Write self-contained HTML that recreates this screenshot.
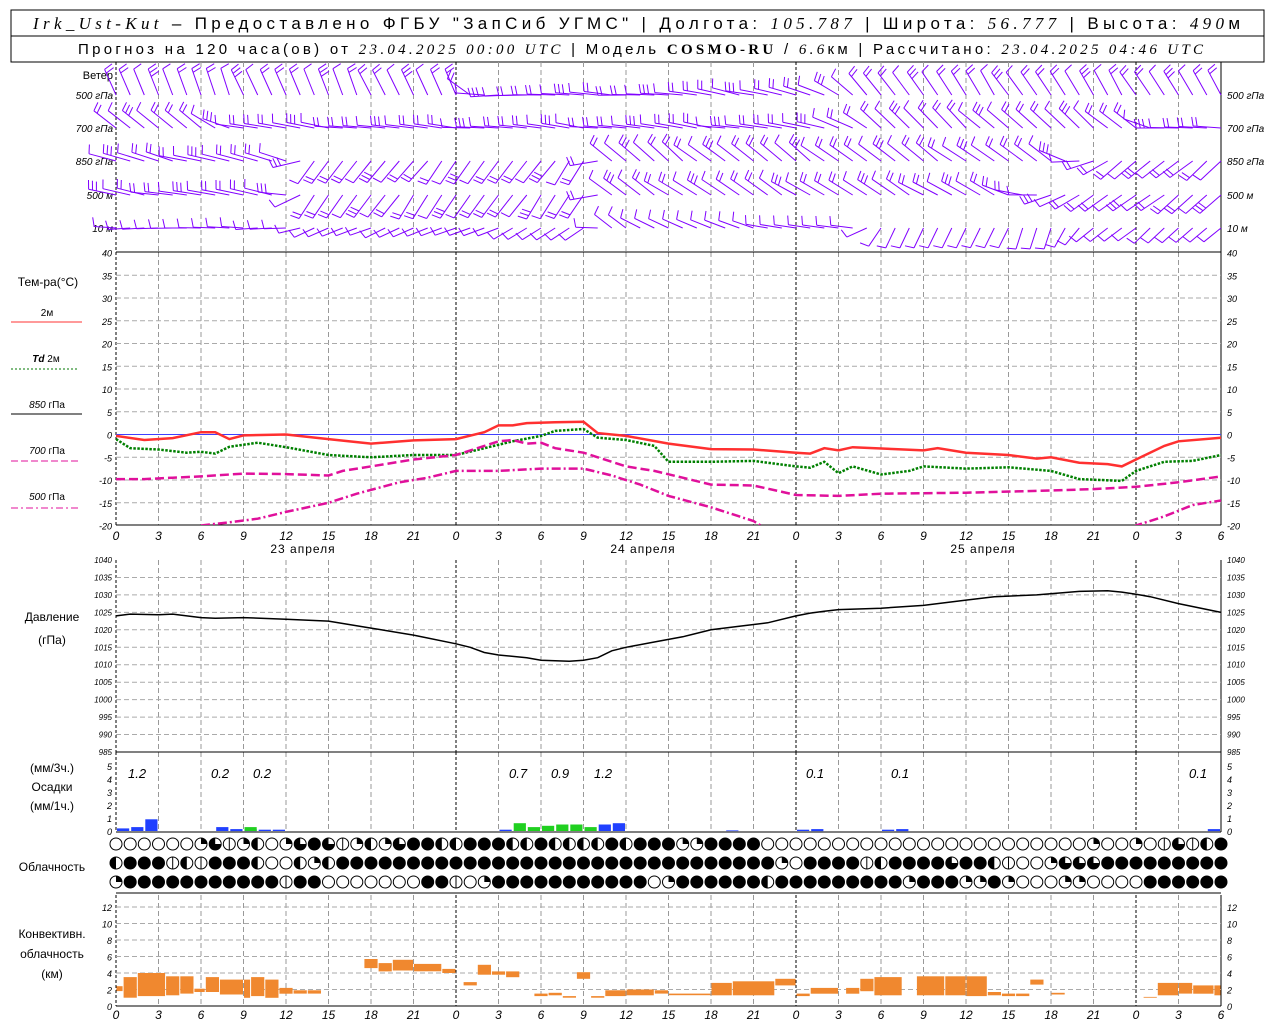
<!DOCTYPE html>
<html><head><meta charset="utf-8"><style>
html,body{margin:0;padding:0;background:#fff;width:1280px;height:1024px;overflow:hidden}
svg{display:block}
#w{position:absolute;left:0;top:0;width:1280px;height:1024px}
text{font-family:"Liberation Sans","DejaVu Sans",sans-serif}
</style></head><body>
<svg id="s" width="1280" height="1024" xmlns="http://www.w3.org/2000/svg" style="position:absolute;left:0;top:0">
<rect x="11" y="10" width="1253" height="52" fill="none" stroke="#000" stroke-width="1"/>
<line x1="11" y1="36" x2="1264" y2="36" stroke="#000"/>
<text x="33" y="29" font-size="17" textLength="1207" lengthAdjust="spacing"><tspan font-style="italic" font-family="Liberation Serif">Irk_Ust-Kut</tspan> – Предоставлено ФГБУ "ЗапСиб УГМС" | Долгота: <tspan font-style="italic" font-family="Liberation Serif">105.787</tspan> | Широта: <tspan font-style="italic" font-family="Liberation Serif">56.777</tspan> | Высота: <tspan font-style="italic" font-family="Liberation Serif">490</tspan>м</text>
<text x="78" y="54" font-size="15" textLength="1125" lengthAdjust="spacing">Прогноз на 120 часа(ов) от <tspan font-style="italic" font-family="Liberation Serif">23.04.2025 00:00 UTC</tspan>  | Модель <tspan font-weight="bold" font-family="Liberation Serif">COSMO-RU</tspan> / <tspan font-style="italic" font-family="Liberation Serif">6.6</tspan>км | Рассчитано: <tspan font-style="italic" font-family="Liberation Serif">23.04.2025 04:46 UTC</tspan></text>
</svg>
<div id="w"></div>
<script>
var out='';
var X0=116,PX=14.1667;
function hx(h){return X0+h*PX}
function f1(v){return (Math.round(v*10)/10).toString()}
function L(x1,y1,x2,y2,c,w,d){out+='<line x1="'+f1(x1)+'" y1="'+f1(y1)+'" x2="'+f1(x2)+'" y2="'+f1(y2)+'" stroke="'+(c||'#000')+'" stroke-width="'+(w||1)+'"'+(d?' stroke-dasharray="'+d+'"':'')+'/>';}
function T(x,y,t,sz,anc,st){out+='<text x="'+x+'" y="'+y+'" font-size="'+(sz||11)+'"'+(anc?' text-anchor="'+anc+'"':'')+(st||'')+'>'+t+'</text>';}
function R(x,y,w,h,c){out+='<rect x="'+f1(x)+'" y="'+f1(y)+'" width="'+f1(w)+'" height="'+f1(h)+'" fill="'+c+'"/>';}
var XR=hx(78);
var IT=' font-style="italic"';
function poly(pts,fn,c,w,d){var p=pts.map(function(q){return f1(hx(q[0]))+','+f1(fn(q[1]))}).join(' ');out+='<polyline points="'+p+'" fill="none" stroke="'+c+'" stroke-width="'+w+'"'+(d?' stroke-dasharray="'+d+'"':'')+'/>';}
function hours(y){for(var h=0;h<=78;h+=3){T(hx(h),y,(h%24),12,'middle',IT);}}
function ty(t){return 434.5-t*4.55}
function py(p){return 560+(1040-p)*3.4909}
function ry(v){return 831-v*13}
function ky(k){return 1006-k*8.25}

try{
function vgrid(y1,y2){for(var h=0;h<=78;h+=3){var day=(h%24==0);L(hx(h),y1,hx(h),y2,day?'#000':'#999',1,day?'3,2':'5,3');}}
vgrid(62,252);vgrid(252,525);vgrid(560,752);vgrid(752,832);vgrid(895,1006);
[[62,252],[252,525],[560,752],[752,832],[895,1006]].forEach(function(a){L(X0,a[0],X0,a[1],'#000',1,'3,2');L(XR,a[0],XR,a[1],'#000',1);});
}catch(e){}

try{
T(113,79,'Ветер',11,'end');
var lv=[[95,'500 гПа'],[128,'700 гПа'],[161,'850 гПа'],[195,'500 м'],[228,'10  м']];
lv.forEach(function(l){T(113,l[0]+4,l[1],10,'end',IT);T(1227,l[0]+4,l[1],10,'start',IT);});
var sched=[
 [[0,250],[24,245],[26,180],[40,185],[50,200],[54,235],[78,240]],
 [[0,220],[7,215],[9,190],[24,185],[50,190],[54,225],[72,220],[74,180],[78,180]],
 [[0,195],[12,195],[14,130],[33,125],[35,220],[66,215],[69,165],[71,140],[78,140]],
 [[0,190],[12,190],[14,125],[33,125],[35,215],[62,210],[66,165],[69,145],[78,140]],
 [[0,180],[12,180],[14,155],[24,160],[33,145],[35,215],[45,195],[52,185],[54,120],[66,110],[69,140],[78,140]]];
function ang(sc,h){for(var i=0;i<sc.length-1;i++){if(h>=sc[i][0]&&h<=sc[i+1][0]){var d=(sc[i+1][0]-sc[i][0])||1;var f=(h-sc[i][0])/d;return sc[i][1]+f*(sc[i+1][1]-sc[i][1]);}}return sc[sc.length-1][1];}
var P='#8000ff';
for(var li=0;li<5;li++){for(var h=0;h<=78;h++){
 var a=(ang(sched[li],h)+((h*37+li*11)%9-4))*Math.PI/180,len=(li==4)?22:28;
 var x=hx(h),y=lv[li][0],dx=Math.cos(a),dy=Math.sin(a),ex=x+dx*len,ey=y+dy*len;
 L(x,y,ex,ey,P,1);
 var nb=(li==4)?1:1+((h+li)%3==0?1:0)+((h+li)%2);
 var bx=dy,by=-dx; if(by>0){bx=-bx;by=-by;}
 for(var b=0;b<nb;b++){var qx=ex-dx*b*4,qy=ey-dy*b*4;L(qx,qy,qx+bx*9+dx*2,qy+by*9+dy*2,P,1);}
}}
}catch(e){}

try{
L(X0,252,XR,252,'#000',1);
for(var t=-20;t<=40;t+=5){var y=ty(t);if(t>-20&&t<40)L(X0,y,XR,y,'#aaa',1,'5,3');T(112,y+4,t,9,'end',IT);T(1227,y+4,t,9,'start',IT);}
L(X0,ty(0),XR,ty(0),'#4040ff',1);
L(X0,525,XR,525,'#000',1);
T(48,286,'Тем-ра(°С)',12,'middle');
T(47,316,'2м',10,'middle');L(11,322,82,322,'#f33',1);
T(46,362,'<tspan font-weight="bold" font-style="italic">Td</tspan>  2м',10,'middle');L(11,369,78,369,'#070',1,'2,2');
T(47,408,'<tspan font-style="italic">850</tspan> гПа',10,'middle');L(11,414,82,414,'#000',1);
T(47,454,'<tspan font-style="italic">700</tspan> гПа',10,'middle');L(11,461,78,461,'#e0109b',1,'7,3');
T(47,500,'<tspan font-style="italic">500</tspan> гПа',10,'middle');L(11,508,78,508,'#e0109b',1,'7,3,2,3');
out+='<clipPath id="ct"><rect x="116" y="252" width="1106" height="273"/></clipPath><g clip-path="url(#ct)">';
poly([[0,-0.3],[2,-1.2],[4,-0.8],[6,0.5],[7,0.5],[8,-1],[9,-0.2],[12,0],[15,-1],[18,-2],[21,-1.3],[24,-1],[26,0.5],[27,2],[28,2],[29,2.5],[31,2.7],[33,2.8],[34,0.3],[36,-0.3],[39,-2],[42,-3.2],[45,-3.3],[48,-4],[49,-4.2],[50,-3],[51,-3.5],[52,-2.8],[55,-3.2],[57,-3.5],[58,-3],[60,-4],[63,-4.5],[65,-5.3],[66,-5],[68,-6.2],[70,-6.5],[71,-7],[72,-5.5],[74,-2.5],[75,-1.5],[78,-0.7]],ty,'#ff3030',2.5);
poly([[0,-1],[1,-3],[3,-3.3],[5,-4],[6,-3.8],[7,-4.2],[8,-2.7],[10,-1.8],[12,-2.8],[15,-4.5],[18,-5],[21,-4.5],[24,-4.5],[26,-3],[28,-1.5],[30,-0.3],[31,0.8],[33,1.2],[34,-0.7],[36,-1.2],[38,-2.5],[39,-6],[42,-6],[45,-5.8],[48,-7],[49,-7.3],[50,-6],[51,-8.5],[52,-7],[54,-8.8],[56,-8],[57,-7],[60,-7.5],[63,-7.2],[66,-8],[68,-9.8],[71,-10.2],[72,-8],[74,-6],[76,-5.8],[78,-4.5]],ty,'#008000',2.5,'2.5,1.5');
poly([[0,-9.8],[2,-9.8],[4,-9.5],[6,-9.2],[9,-8.6],[12,-8.7],[15,-9],[16,-8],[18,-7],[21,-5.5],[24,-4.5],[26,-2.5],[27,-1.5],[28,-1.2],[29,-2],[30,-1.8],[31,-3],[33,-4],[34,-5],[36,-7],[38,-8],[40,-9.5],[42,-11],[45,-11.2],[48,-13.3],[51,-13.5],[54,-13],[60,-12.8],[66,-12.3],[69,-12],[72,-11.5],[75,-10.5],[78,-9.2]],ty,'#e0109b',2.5,'9,4');
poly([[6,-20],[8,-19.3],[10,-18.5],[12,-17],[15,-15],[17,-13],[20,-10.5],[22,-9.5],[24,-8],[27,-8],[30,-7.5],[33,-7.5],[35,-9],[37,-11],[39,-13.5],[42,-16],[45,-19],[46,-21],[71,-22],[72,-20],[74,-18],[76,-15.5],[78,-14.5]],ty,'#e0109b',2.5,'9,3,2,3');
out+='</g>';
hours(540);
T(303,553,'23  апреля',12,'middle',' letter-spacing="1"');T(643,553,'24  апреля',12,'middle',' letter-spacing="1"');T(983,553,'25  апреля',12,'middle',' letter-spacing="1"');
}catch(e){}

try{
for(var p=985;p<=1040;p+=5){var y2=py(p);if(p>985&&p<1040)L(X0,y2,XR,y2,'#aaa',1,'5,3');T(112,y2+3,p,8,'end',IT);T(1227,y2+3,p,8,'start',IT);}
L(X0,752,XR,752,'#000',1);
T(52,621,'Давление',12,'middle');T(52,644,'(гПа)',12,'middle');
poly([[0,1024],[1,1024.5],[3,1024.3],[4,1024.5],[6,1023.5],[7,1023.3],[9,1023.5],[12,1023],[15,1022.5],[18,1020.5],[21,1018.5],[24,1016],[25,1015],[26,1013.5],[27,1012.8],[29,1012],[30,1011.3],[32,1011],[33,1011.3],[34,1012],[35,1014],[36,1015],[38,1016.5],[40,1018],[42,1020],[44,1021],[46,1022],[48,1024],[49,1024.8],[50,1025.3],[51,1025.8],[54,1026.2],[57,1027],[60,1028.5],[62,1029.5],[65,1030],[68,1031],[70,1031.2],[71,1030.8],[72,1030.2],[73,1029.5],[75,1027.5],[78,1025]],py,'#000',1.5);
}catch(e){}

try{
for(var v=0;v<=5;v++){T(112,ry(v)+4,v,9,'end',IT);T(1227,ry(v)+4,v,9,'start',IT);}
T(52,772,'(мм/3ч.)',12,'middle');T(52,791,'Осадки',12,'middle');T(52,810,'(мм/1ч.)',12,'middle');
var pr=[[0,.2,'b'],[1,.3,'b'],[2,.9,'b'],[7,.3,'b'],[8,.15,'b'],[9,.15,'b'],[10,.1,'b'],[11,.1,'b'],[9,.3,'g'],[27,.1,'b'],[28,.6,'g'],[29,.3,'g'],[30,.4,'g'],[31,.5,'g'],[32,.5,'g'],[33,.3,'g'],[34,.5,'b'],[35,.6,'b'],[43,.05,'b'],[48,.1,'b'],[49,.15,'b'],[54,.1,'b'],[55,.15,'b'],[77,.15,'b']];
pr.forEach(function(q){R(hx(q[0])+1,ry(q[1]),PX-2,q[1]*13,q[2]=='b'?'#2040ff':'#20d020');});
[[128,'1.2'],[211,'0.2'],[253,'0.2'],[509,'0.7'],[551,'0.9'],[594,'1.2'],[806,'0.1'],[891,'0.1'],[1189,'0.1']].forEach(function(q){T(q[0],778,q[1],13,'start',IT);});
L(X0,832,XR,832,'#000',1);
}catch(e){}

try{
T(52,871,'Облачность',12,'middle');
var rows=['OOOOOOQTVQHOQTFTVQHQTFFHHFFFHHFHHHHFHFFFQQFFFFOOOOOOOOOOOOOOOOOOOOOOOQOOQOVTVHFFFF',
'HFFFVHVFFFHOOHQHFFFFFFFFFFFFFFFFFFFFFFFFFFFFFFFQOFFFFVHFFFFTFFHVOOQTTTFFFFFFFFF',
'QFFFFFFFFFFFVFFOOOOOOOFFVOQFFFFFFFFFFFOQFFFFFFHFFFFFFFFFQFFFQQFQOOOQQOOOOFFFFF'];
var cy=[844,863,882];
function circ(x,y,k){var r=6;out+='<circle cx="'+f1(x)+'" cy="'+y+'" r="'+r+'" fill="'+(k=='F'?'#000':'#fff')+'" stroke="#000" stroke-width="1"/>';
 if(k=='H')out+='<path d="M'+f1(x)+','+(y-r)+' A'+r+','+r+' 0 0,0 '+f1(x)+','+(y+r)+' Z" fill="#000"/>';
 if(k=='V'){L(x,y-r,x,y+r,'#000',1);}
 if(k=='Q')out+='<path d="M'+f1(x)+','+y+' L'+f1(x)+','+(y-r)+' A'+r+','+r+' 0 0,1 '+f1(x+r)+','+y+' Z" fill="#000"/>';
 if(k=='T')out+='<path d="M'+f1(x)+','+y+' L'+f1(x)+','+(y-r)+' A'+r+','+r+' 0 1,0 '+f1(x+r)+','+y+' Z" fill="#000"/>';}
for(var ri=0;ri<3;ri++){for(var hh=0;hh<=78;hh++){var kk=rows[ri].charAt(hh)||'F';circ(hx(hh),cy[ri],kk);}}
L(X0,893,XR,893,'#000',1);
}catch(e){}

try{
for(var k=0;k<=12;k+=2){var y3=ky(k);if(k>0)L(X0,y3,XR,y3,'#aaa',1,'5,3');T(112,y3+4,k,9,'end',IT);T(1227,y3+4,k,9,'start',IT);}
T(52,938,'Конвективн.',12,'middle');T(52,958,'облачность',12,'middle');T(52,978,'(км)',12,'middle');
var cb=[[0,.5,1.8,2.4],[.5,1.5,1,3.5],[1.5,3.5,1.2,4],[3.5,4.5,1.3,3.6],[4.5,5.5,1.5,3.6],[5.5,6.3,1.7,2.1],[6.3,7.3,1.7,3.5],[7.3,9,1.4,3.2],[9,9.5,1,3.2],[9.5,10.5,1.2,3.5],[10.5,11.5,1,3.2],[11.5,12.5,1.5,2.2],[12.5,13.5,1.5,1.9],[13.5,14.5,1.5,1.9],[17.5,18.5,4.6,5.7],[18.5,19.5,4.2,5.2],[19.5,21,4.3,5.6],[21,23,4.2,5.1],[23,24,4,4.5],[24.5,25.5,2.5,2.9],[25.5,26.5,3.8,5],[26.5,27.5,3.8,4.2],[27.5,28.5,3.5,4.2],[29.5,30.5,1.2,1.5],[30.5,31.5,1.3,1.6],[31.5,32.5,1,1.2],[32.5,33.5,3.3,4.1],[33.5,34.5,1,1.2],[34.5,36,1.2,1.9],[36,38,1.3,2],[38,39,1.5,1.9],[39,42,1.3,1.5],[42,43.5,1.3,2.8],[43.5,46.5,1.3,3],[46.5,48,2.5,3.3],[48,49,1.2,1.5],[49,51,1.5,2.2],[51.5,52.5,1.5,2.2],[52.5,53.5,1.8,3.3],[53.5,55.5,1.3,3.5],[56.5,58.5,1.3,3.6],[58.5,60,1.3,3.6],[60,61.5,1.2,3.6],[61.5,62.5,1.3,1.7],[62.5,63.5,1.2,1.5],[63.5,64.5,1.2,1.5],[64.5,65.5,2.6,3.2],[66,67,1.4,1.6],[72.5,73.5,1,1.1],[73.5,75,1.3,2.8],[75,76,1.5,2.8],[76,77.5,1.5,2.5],[77.5,78,1.3,2.5]];
cb.forEach(function(q){R(hx(q[0])+.5,ky(q[3]),(q[1]-q[0])*PX-1,(q[3]-q[2])*8.25,'#f0882f');});
L(X0,1006,XR,1006,'#000',1);
hours(1019);
}catch(e){}

document.getElementById('w').innerHTML='<svg xmlns="http://www.w3.org/2000/svg" width="1280" height="1024">'+out+'</svg>';
</script>
</body></html>
